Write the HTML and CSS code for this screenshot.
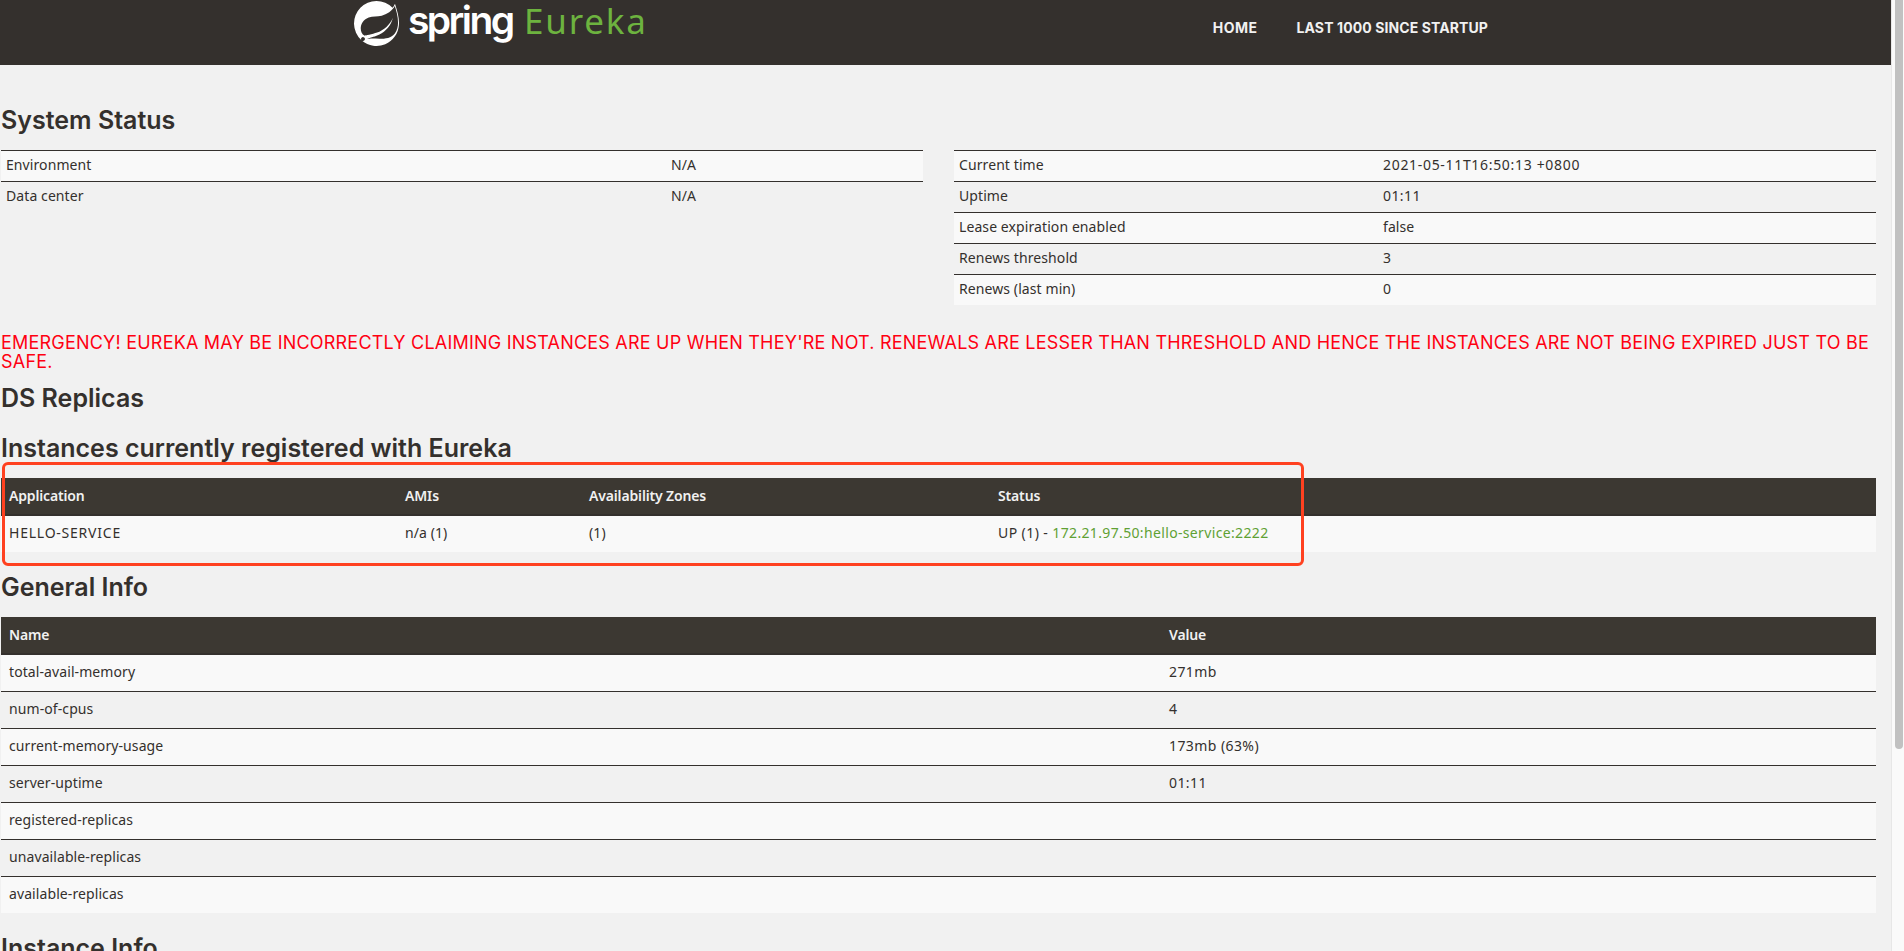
FILE: index.html
```html
<!DOCTYPE html>
<html lang="en">
<head>
<meta charset="utf-8">
<title>Eureka</title>
<link rel="stylesheet" href="styles.css">
</head>
<body>
<div class="page">
  <header class="navbar">
    <a class="brand">
      <svg class="brand-leaf" viewBox="0 0 24 24" aria-hidden="true"><path fill="#fff" d="M21.8537 1.4158a10.4504 10.4504 0 0 1-1.284 2.2471A11.9666 11.9666 0 1 0 3.8518 20.7757l.4445.3951a11.9543 11.9543 0 0 0 19.6316-8.2971c.3457-3.0126-.568-6.8649-2.0742-11.458zM5.5805 20.8745a1.0174 1.0174 0 1 1-.1482-1.4323 1.0396 1.0396 0 0 1 .1482 1.4323zm16.1991-3.5806c-2.9385 3.9263-9.2601 2.5928-13.2852 2.7904 0 0-.7161.0494-1.4323.1481 0 0 .2717-.1234.6174-.2469 2.8398-.9877 4.1732-1.1853 5.9018-2.0743 3.2349-1.6545 6.4698-5.2844 7.1118-9.0379-1.2347 3.6053-4.9881 6.7167-8.3959 7.9761-2.3459.8643-6.5685 1.7039-6.5685 1.7039l-.1729-.0988c-2.8645-1.4076-2.9632-7.6304 2.2718-9.6306 2.2966-.889 4.4696-.395 6.9637-.9877 2.6422-.6174 5.7043-2.5928 6.9637-5.1363 1.3828 4.1732 3.062 10.6676.0247 14.5932z"/></svg>
      <span class="brand-spring">spring</span>
      <span class="brand-product">Eureka</span>
    </a>
    <nav class="menu">
      <a class="menu-home">Home</a>
      <a class="menu-last">Last 1000 since startup</a>
    </nav>
  </header>

  <main class="content">
    <h1 class="title">System Status</h1>
    <div class="status">
      <table class="grid compact env">
        <colgroup><col class="env-key"><col></colgroup>
        <tbody>
          <tr><td>Environment</td><td>N/A</td></tr>
          <tr><td>Data center</td><td>N/A</td></tr>
        </tbody>
      </table>
      <table class="grid compact">
        <colgroup><col class="time-key"><col></colgroup>
        <tbody>
          <tr><td>Current time</td><td class="stamp">2021-05-11T16:50:13 +0800</td></tr>
          <tr><td>Uptime</td><td class="num">01:11</td></tr>
          <tr><td>Lease expiration enabled</td><td>false</td></tr>
          <tr><td>Renews threshold</td><td>3</td></tr>
          <tr><td>Renews (last min)</td><td>0</td></tr>
        </tbody>
      </table>
    </div>

    <h4 class="emergency">EMERGENCY! EUREKA MAY BE INCORRECTLY CLAIMING INSTANCES ARE UP WHEN THEY'RE NOT. RENEWALS ARE LESSER THAN THRESHOLD AND HENCE THE INSTANCES ARE NOT BEING EXPIRED JUST TO BE SAFE.</h4>

    <h1 class="title replicas">DS Replicas</h1>

    <h1 class="title">Instances currently registered with Eureka</h1>
    <div class="registered">
      <table class="grid">
        <colgroup><col class="app-name"><col class="app-ami"><col class="app-zone"><col></colgroup>
        <thead>
          <tr><th>Application</th><th>AMIs</th><th>Availability Zones</th><th>Status</th></tr>
        </thead>
        <tbody>
          <tr><td class="caps">HELLO-SERVICE</td><td>n/a (1)</td><td>(1)</td><td class="num">UP (1) - <a class="link">172.21.97.50:hello-service:2222</a></td></tr>
        </tbody>
      </table>
      <div class="highlight"></div>
    </div>

    <h1 class="title general">General Info</h1>
    <table class="grid">
      <colgroup><col class="info-name"><col></colgroup>
      <thead>
        <tr><th>Name</th><th>Value</th></tr>
      </thead>
      <tbody>
        <tr><td>total-avail-memory</td><td class="num">271mb</td></tr>
        <tr><td>num-of-cpus</td><td class="num">4</td></tr>
        <tr><td>current-memory-usage</td><td class="num">173mb (63%)</td></tr>
        <tr><td>server-uptime</td><td class="num">01:11</td></tr>
        <tr><td>registered-replicas</td><td></td></tr>
        <tr><td>unavailable-replicas</td><td></td></tr>
        <tr><td>available-replicas</td><td></td></tr>
      </tbody>
    </table>

    <h1 class="title instance">Instance Info</h1>
  </main>
</div>
<div class="scroll-track"><div class="scroll-thumb"></div></div>
</body>
</html>
```
FILE: styles.css
```css
* {
  box-sizing: border-box;
}

body {
  margin: 0;
  height: 951px;
  overflow: hidden;
  display: flex;
  background: #f1f1f1;
  color: #34302d;
  font: 14px/28px "Noto Sans", sans-serif;
}

.page {
  flex: 1;
  min-width: 0;
}

/* Header */
.navbar {
  display: flex;
  justify-content: space-between;
  height: 65px;
  padding: 0 403px 0 354px;
  background: #34302d;
}

.brand {
  display: flex;
  color: #fff;
  white-space: nowrap;
}

.brand-leaf {
  width: 45px;
  height: 45px;
  margin-top: 1px;
}

.brand-spring {
  width: 116px;
  margin-left: 9px;
  font: 600 39px/40px Inter, sans-serif;
  letter-spacing: -2.6px;
}

.brand-product {
  color: #6db33f;
  font: 35px/42px "Noto Sans", sans-serif;
  letter-spacing: 1.8px;
}

.menu {
  display: flex;
  gap: 39px;
  color: #f1f1f1;
  font: 700 14px/55px Inter, sans-serif;
  text-transform: uppercase;
  white-space: nowrap;
}

.menu-home {
  letter-spacing: 0.5px;
}

.menu-last {
  letter-spacing: 0.1px;
}

/* Content */
.content {
  padding: 42px 15px 0 1px;
}

.title {
  margin: 0 0 17px;
  font: 600 25px/26px Inter, sans-serif;
}

.status {
  display: flex;
  gap: 31px;
  align-items: flex-start;
}

.emergency {
  margin: 28px 0 14px;
  color: #ff0011;
  font: 18px/19px Inter, sans-serif;
  letter-spacing: 0.21px;
}

.replicas {
  margin-bottom: 24px;
}

.general {
  margin-top: 22px;
}

.instance {
  margin-top: 22px;
}

/* Tables */
.grid {
  width: 100%;
  table-layout: fixed;
  border-spacing: 0;
}

.grid.compact {
  flex: 1;
  width: 0;
}

.grid td,
.grid th {
  height: 37px;
  padding: 0 8px 2px;
  border-top: 1px solid #34302d;
  text-align: left;
  white-space: nowrap;
  letter-spacing: 0.09px;
}

.grid tbody tr:nth-child(odd) {
  background: #f9f9f9;
}

.grid thead {
  background: #3c3832;
  color: #f1f1f1;
}

.grid th {
  height: 38px;
  padding-bottom: 0;
  border-top: 0;
  border-bottom: 2px solid #34302d;
  font-weight: 600;
  letter-spacing: -0.15px;
}

.grid thead + tbody tr:first-child td {
  height: 36px;
  border-top: 0;
}

.grid.compact td {
  height: 31px;
  padding: 0 5px 2px;
}

.env-key {
  width: 665px;
}

.time-key {
  width: 424px;
}

.app-name {
  width: 396px;
}

.app-ami {
  width: 184px;
}

.app-zone {
  width: 409px;
}

.info-name {
  width: 1160px;
}

.grid .stamp {
  letter-spacing: 0.68px;
}

.grid .num {
  letter-spacing: 0.42px;
}

.grid .caps {
  letter-spacing: 0.77px;
}

.link {
  color: #5fa134;
  letter-spacing: 0.35px;
}

/* Outline drawn over the registered instances */
.registered {
  position: relative;
}

.highlight {
  position: absolute;
  top: -16px;
  left: 1px;
  width: 1302px;
  height: 104px;
  border: 3px solid #ff4120;
  border-radius: 6px;
}

/* Scrollbar */
.scroll-track {
  width: 13px;
  padding-left: 3px;
  border-left: 1px solid #e7e7e7;
  background: #fafafa;
}

.scroll-thumb {
  width: 8px;
  height: 749px;
  border-radius: 0 0 4px 4px;
  background: #c1c1c1;
}
```
